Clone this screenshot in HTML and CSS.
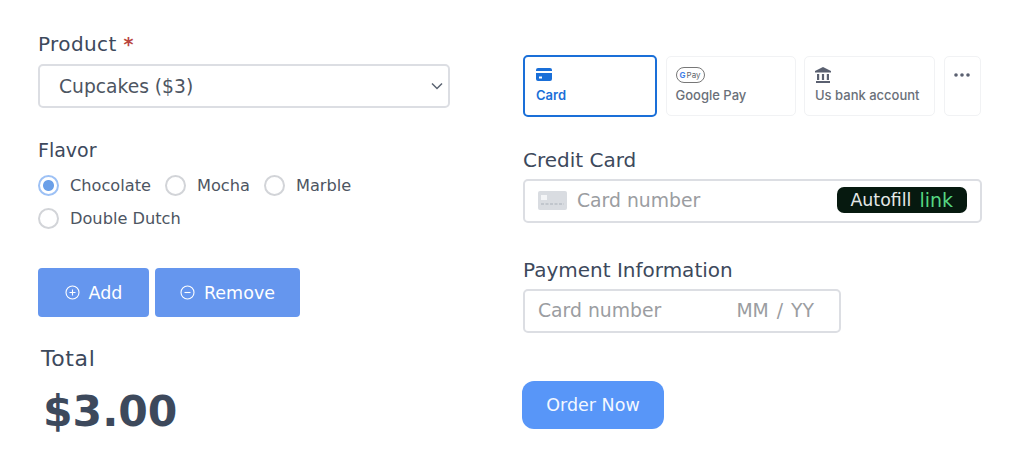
FILE: index.html
```html
<!DOCTYPE html>
<html lang="en">
<head>
    <meta charset="UTF-8">
    <meta name="viewport" content="width=device-width, initial-scale=1.0">
    <title>Order Form</title>
    <link rel="stylesheet" href="styles.css">
</head>
<body>
    <div class="page">
        <div class="col-left">
            <div class="label product-label">Product <span class="required">*</span></div>
            <div class="select">
                <span>Cupcakes ($3)</span>
                <svg class="chevron" width="12" height="8" viewBox="0 0 12 8"><path d="M1 1.5l5 5 5-5" fill="none" stroke="#5b6472" stroke-width="1.5"/></svg>
            </div>
            <div class="label flavor-label">Flavor</div>
            <div class="radios">
                <div class="radio-row">
                    <span class="radio checked"></span><span class="radio-text">Chocolate</span>
                    <span class="radio"></span><span class="radio-text">Mocha</span>
                    <span class="radio"></span><span class="radio-text">Marble</span>
                </div>
                <div class="radio-row">
                    <span class="radio"></span><span class="radio-text">Double Dutch</span>
                </div>
            </div>
            <div class="buttons">
                <div class="button add">
                    <svg width="15" height="15" viewBox="0 0 15 15" fill="none" stroke="#fff" stroke-width="1.1"><circle cx="7.5" cy="7.5" r="6.5"/><path d="M7.5 4.5v6M4.500 7.5h6"/></svg>
                    Add
                </div>
                <div class="button remove">
                    <svg width="15" height="15" viewBox="0 0 15 15" fill="none" stroke="#fff" stroke-width="1.1"><circle cx="7.5" cy="7.5" r="6.5"/><path d="M4.500 7.500h6"/></svg>
                    Remove
                </div>
            </div>
            <div class="total-label">Total</div>
            <div class="total">$3.00</div>
        </div>
        <div class="col-right">
            <div class="tabs">
                <div class="tab selected">
                    <svg width="16" height="13" viewBox="0 0 16 13"><path d="M2 0h12a2 2 0 0 1 2 2v1H0V2a2 2 0 0 1 2-2zM0 5h16v6a2 2 0 0 1-2 2H2a2 2 0 0 1-2-2zM3 8.500v2h3v-2z" fill="#1a6fd8" fill-rule="evenodd"/></svg>
                    <span>Card</span>
                </div>
                <div class="tab gpay">
                    <span class="gpay-badge"><b class="g">G</b>Pay</span>
                    <span>Google Pay</span>
                </div>
                <div class="tab bank">
                    <svg width="16" height="16" viewBox="0 0 16 16" fill="#5a6070"><path d="M8 0l8 4v1.500H0V4zM2 7h2.200v6H2zM6.900 7h2.200v6H6.900zM11.800 7H14v6h-2.200zM1 14h14v2H1z"/></svg>
                    <span>Us bank account</span>
                </div>
                <div class="tab more">
                    <svg width="16" height="4" viewBox="0 0 16 4" fill="#5a6070"><circle cx="2" cy="2" r="1.800"/><circle cx="8" cy="2" r="1.800"/><circle cx="14" cy="2" r="1.800"/></svg>
                </div>
            </div>
            <div class="label credit-label">Credit Card</div>
            <div class="input card-input">
                <svg width="29" height="19" viewBox="0 0 29 19"><rect width="29" height="19" rx="2" fill="#d9dce1"/><rect x="3" y="4" width="6" height="5" fill="#f4f5f7"/><path d="M3 13h23" stroke="#aab0b9" stroke-width="1.200" stroke-dasharray="3 1.500"/></svg>
                <span class="placeholder">Card number</span>
                <div class="autofill">Autofill <span class="link">link</span></div>
            </div>
            <div class="label payment-label">Payment Information</div>
            <div class="input payment-input">
                <span class="placeholder">Card number</span>
                <span class="placeholder expiry">MM / YY</span>
            </div>
            <div class="order">Order Now</div>
        </div>
    </div>
</body>
</html>
```

FILE: styles.css
```css
body {
    margin: 0;
    background: #fff;
    font-family: "DejaVu Sans", sans-serif;
    color: #3d495c;
}
.page {
    display: flex;
    height: 475px;
    overflow: hidden;
}
.col-left {
    width: 412px;
    margin-left: 38px;
    padding-top: 32px;
}
.col-right {
    width: 459px;
    margin-left: 73px;
    padding-top: 55px;
}
.label {
    font-size: 20px;
    line-height: 24px;
    color: #3d495c;
}
.product-label {
    letter-spacing: 0.4px;
}
.required {
    color: #b9453f;
    font-size: 19px;
    font-weight: bold;
}
.select {
    display: flex;
    justify-content: space-between;
    align-items: center;
    height: 44px;
    box-sizing: border-box;
    margin-top: 8px;
    padding: 0 5px 0 19px;
    border: 2px solid #dcdee3;
    border-radius: 5px;
    font-size: 18.7px;
    color: #4d5562;
}
.flavor-label {
    margin-top: 30px;
    font-size: 19px;
}
.radios {
    margin-top: 7px;
}
.radio-row {
    display: flex;
    align-items: center;
    height: 33px;
    font-size: 16.2px;
    color: #4d5562;
}
.radio {
    width: 17px;
    height: 17px;
    border: 2px solid #d2d4d8;
    border-radius: 50%;
    flex-shrink: 0;
    background: #fff;
}
.radio.checked {
    border-color: #9dc1f5;
    background: radial-gradient(circle, #6a9fe8 0 5px, #fff 6px);
}
.radio-text {
    margin: 0 14px 0 11px;
}
.buttons {
    display: flex;
    gap: 6px;
    margin-top: 33px;
}
.button {
    display: flex;
    align-items: center;
    justify-content: center;
    gap: 9px;
    height: 49px;
    border-radius: 4px;
    background: #6596ee;
    color: #fff;
    font-size: 17.500px;
}
.add {
    width: 111px;
}
.remove {
    width: 145px;
}
.total-label {
    margin: 29px 0 0 3px;
    font-size: 22px;
    line-height: 26px;
    letter-spacing: 0.6px;
}
.total {
    margin: 12px 0 0 5px;
    font-size: 42.500px;
    line-height: 56px;
    font-weight: bold;
}
.tabs {
    display: flex;
    gap: 8.500px;
    height: 62px;
}
.tab {
    display: flex;
    flex-direction: column;
    justify-content: flex-start;
    gap: 4px;
    box-sizing: border-box;
    padding: 10px 9px 0;
    height: 60px;
    margin-top: 1px;
    border: 1px solid #f1f2f4;
    border-radius: 5px;
    font-size: 13px;
    font-weight: 500;
    font-family: "Inter", sans-serif;
    color: #6a7079;
}
.tab.selected {
    width: 134px;
    height: 62px;
    margin-top: 0;
    padding: 11px 11px 0;
    gap: 6px;
    border: 2px solid #1a6fd8;
    color: #1a6fd8;
    font-weight: 600;
}
.gpay {
    width: 130px;
}
.bank {
    width: 131px;
}
.bank {
    padding-left: 10px;
}
.more {
    width: 37px;
    padding-top: 16px;
}
.gpay-badge {
    display: block;
    box-sizing: border-box;
    width: 29px;
    height: 16px;
    border: 1px solid #777;
    border-radius: 8px;
    font-size: 8px;
    line-height: 14px;
    text-align: center;
    font-weight: 400;
    color: #5f6368;
    white-space: nowrap;
}
.g {
    color: #3f7ee8;
    margin-right: 1px;
}
.credit-label {
    margin-top: 31px;
}
.input {
    display: flex;
    align-items: center;
    box-sizing: border-box;
    height: 44px;
    margin-top: 7px;
    padding-bottom: 2px;
    border: 2px solid #dcdee3;
    border-radius: 5px;
}
.card-input {
    padding-left: 13px;
    padding-right: 13px;
}
.placeholder {
    color: #9b9da1;
    font-size: 18.800px;
}
.card-input .placeholder {
    margin-left: 10px;
}
.expiry {
    word-spacing: 2px;
}
.autofill {
    margin-left: auto;
    display: flex;
    align-items: center;
    gap: 8px;
    height: 26px;
    padding: 0 14px 0 13px;
    border-radius: 7px;
    background: #06190f;
    color: #e4e8e6;
    font-size: 17.400px;
}
.link {
    color: #55d681;
    font-size: 19px;
}
.payment-label {
    margin-top: 35px;
}
.payment-input {
    width: 318px;
    padding-left: 13px;
    padding-right: 25px;
    justify-content: space-between;
}
.order {
    display: flex;
    align-items: center;
    justify-content: center;
    width: 142px;
    height: 48px;
    margin: 48px 0 0 -1px;
    border-radius: 12px;
    background: #5896f8;
    color: #f4f8ff;
    font-size: 17.500px;
}
```
